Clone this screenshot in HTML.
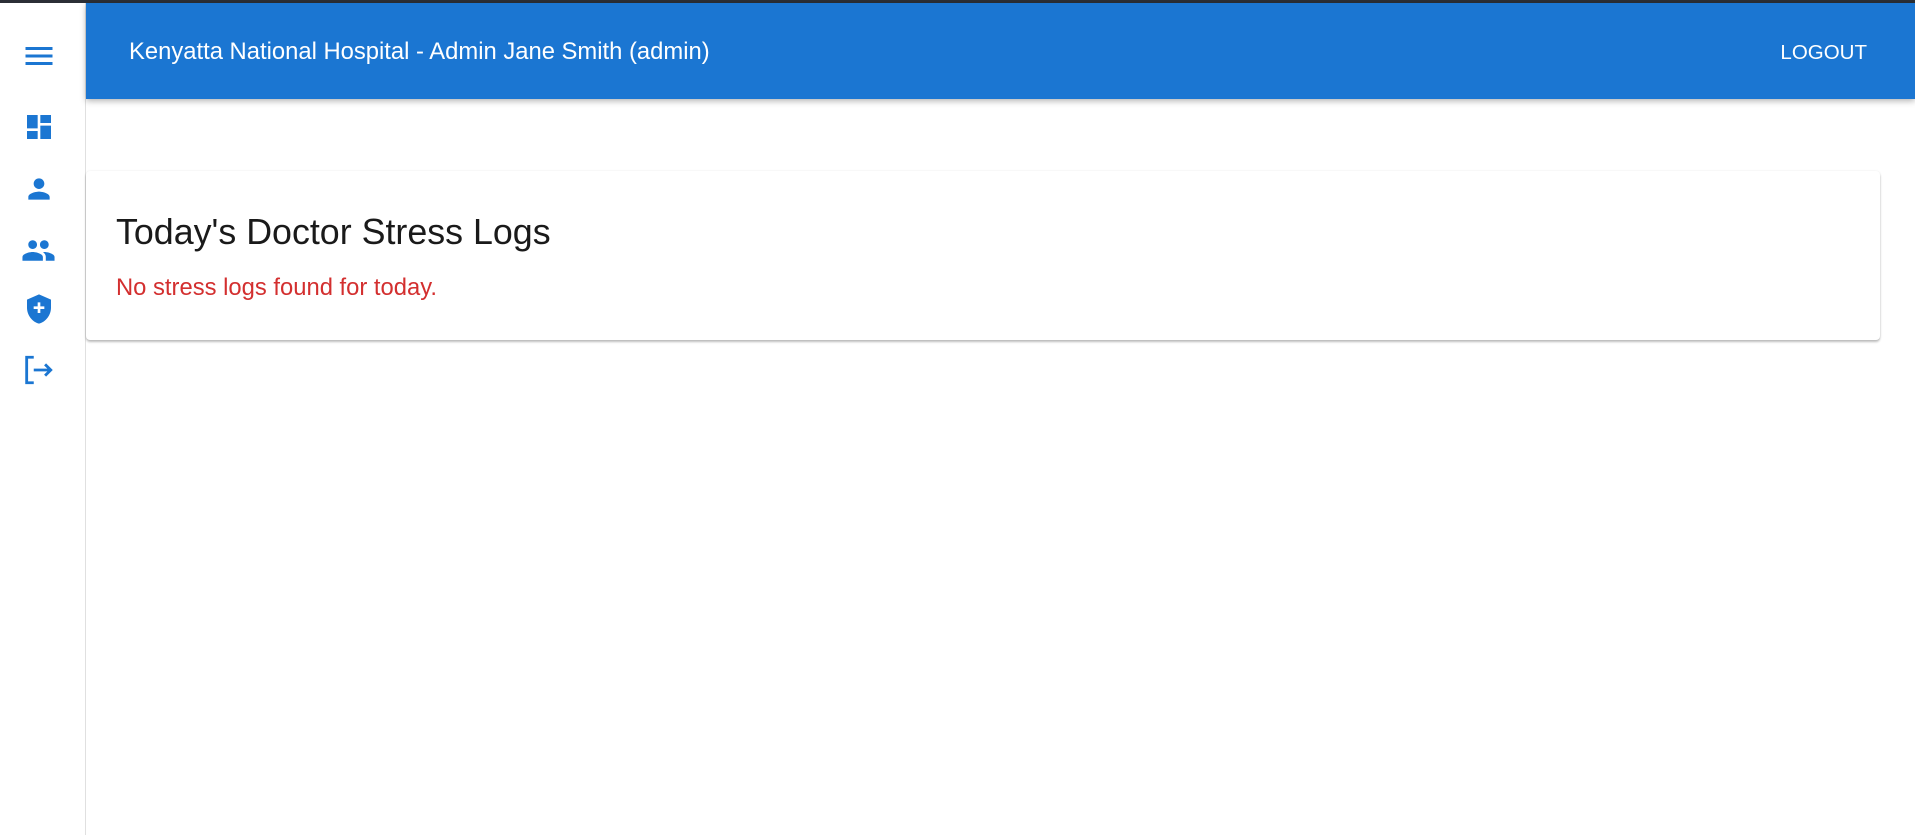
<!DOCTYPE html>
<html><head><meta charset="utf-8"><style>
*{box-sizing:border-box;margin:0;padding:0}
body{width:1915px;height:835px;background:#fff;font-family:"Liberation Sans",sans-serif;position:relative;overflow:hidden}
.top{position:absolute;left:0;top:0;width:1915px;height:3px;background:#2b2f36}
.side{position:absolute;left:0;top:3px;width:86px;height:832px;background:#fff;border-right:1px solid #e0e0e0}
.hdr{position:absolute;left:86px;top:3px;width:1829px;height:96px;background:#1b76d2;box-shadow:0 2px 6px rgba(0,0,0,.3)}
.hdr .t{position:absolute;left:43px;top:35px;color:#fff;font-size:23.8px}
.hdr .l{position:absolute;right:48px;top:38px;color:#fff;font-size:20.5px}
.card{position:absolute;left:86px;top:171px;width:1794px;height:169px;background:#fff;box-shadow:0 2px 2px rgba(0,0,0,.25),0 0 2px rgba(0,0,0,.08);border-radius:4px}
.card h1{position:absolute;left:30px;top:41px;font-weight:400;font-size:35.8px;color:#1a1a1a}
.card p{position:absolute;left:30px;top:103px;font-size:23.8px;color:#d32f2f}
svg{position:absolute;fill:#1b76d2}
</style></head><body>
<div class="top"></div>
<div class="side">
<svg style="left:21px;top:35px" width="36" height="36" viewBox="0 0 24 24"><path d="M3 18h18v-2H3v2zm0-5h18v-2H3v2zm0-7v2h18V6H3z"/></svg>
<svg style="left:23px;top:108px" width="32" height="32" viewBox="0 0 24 24"><path d="M3 13h8V3H3v10zm0 8h8v-6H3v6zm10 0h8V11h-8v10zm0-18v6h8V3h-8z"/></svg>
<svg style="left:23px;top:170px" width="32" height="32" viewBox="0 0 24 24"><path d="M12 12c2.21 0 4-1.79 4-4s-1.79-4-4-4-4 1.79-4 4 1.79 4 4 4zm0 2c-2.67 0-8 1.34-8 4v2h16v-2c0-2.66-5.33-4-8-4z"/></svg>
<svg style="left:21px;top:230px" width="35" height="35" viewBox="0 0 24 24"><path d="M16 11c1.66 0 2.99-1.34 2.99-3S17.66 5 16 5c-1.66 0-3 1.34-3 3s1.34 3 3 3zm-8 0c1.66 0 2.99-1.34 2.99-3S9.66 5 8 5C6.34 5 5 6.340 5 8s1.34 3 3 3zm0 2c-2.33 0-7 1.17-7 3.5V19h14v-2.5c0-2.33-4.67-3.5-7-3.5zm8 0c-.29 0-.62.02-.97.05 1.16.84 1.97 1.97 1.97 3.45V19h6v-2.5c0-2.33-4.67-3.5-7-3.5z"/></svg>
<svg style="left:23px;top:290px" width="32" height="32" viewBox="0 0 24 24"><path d="M12 1L3 5v6c0 5.55 3.84 10.74 9 12 5.16-1.26 9-6.45 9-12V5l-9-4zm4 11h-3v3h-2v-3H8v-2h3V7h2v3h3v2z"/></svg>
<svg style="left:21px;top:350px;fill:none;stroke:#1b76d2;stroke-width:2" width="34" height="34" viewBox="0 0 24 24"><path d="M9 3H4v18h5M9 12h12M17 8l4 4-4 4"/></svg>
</div>
<div class="hdr"><div class="t">Kenyatta National Hospital - Admin Jane Smith (admin)</div><div class="l">LOGOUT</div></div>
<div class="card"><h1>Today's Doctor Stress Logs</h1><p>No stress logs found for today.</p></div>
</body></html>
